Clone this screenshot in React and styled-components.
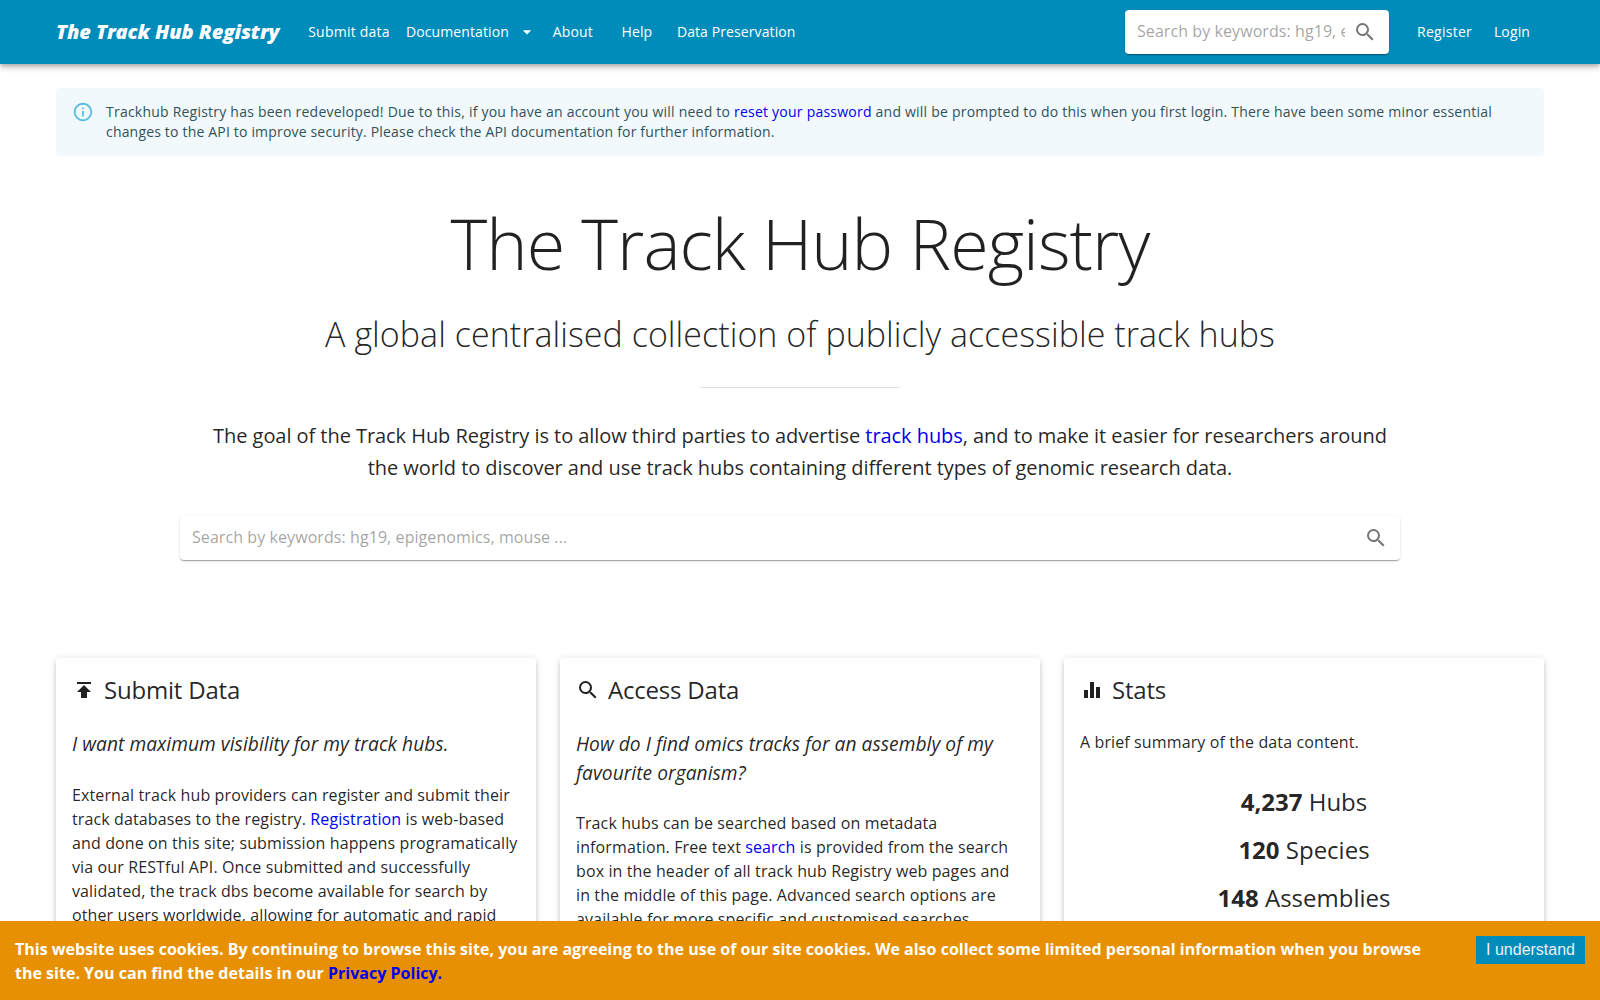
import React from "react";
import styled, { createGlobalStyle } from "styled-components";
import {
  MdArrowDropDown,
  MdEqualizer,
  MdInfoOutline,
  MdPublish,
  MdSearch,
} from "react-icons/md";

const COLORS = {
  primary: "#008cba",
  text: "rgba(0, 0, 0, 0.87)",
  link: "#0000ee",
  alertBg: "#f1f9fc",
  alertText: "#31525b",
  alertIcon: "#5bc0de",
  cookie: "#e89003",
};

const STATS = [
  { value: "4,237", label: "Hubs" },
  { value: "120", label: "Species" },
  { value: "148", label: "Assemblies" },
];

const SearchBox = ({ large }) => (
  <SearchForm $large={large}>
    <SearchInput placeholder="Search by keywords: hg19, epigenomics, mouse ..." />
    <SearchButton type="button" aria-label="search">
      <MdSearch size={24} />
    </SearchButton>
  </SearchForm>
);

const Header = () => (
  <HeaderBar>
    <SiteName href="#">The Track Hub Registry</SiteName>
    <Nav>
      <NavButton $width={98} $spacing="0.24px">
        Submit data
      </NavButton>
      <NavButton $spacing="0.1px">
        Documentation
        <MdArrowDropDown size={20} />
      </NavButton>
      <NavButton>About</NavButton>
      <NavButton>Help</NavButton>
      <NavButton $spacing="0.1px">Data Preservation</NavButton>
    </Nav>
    <SearchBox />
    <UserNav>
      <NavButton $width={71} $spacing="0.26px">
        Register
      </NavButton>
      <NavButton>Login</NavButton>
    </UserNav>
  </HeaderBar>
);

export default function App() {
  return (
    <Page>
      <GlobalStyle />
      <Header />
      <Main>
        <Alert>
          <MdInfoOutline size={22} />
          <AlertMessage>
            Trackhub Registry has been redeveloped! Due to this, if you have an
            account you will need to <Link href="#">reset your password</Link>{" "}
            and will be prompted to do this when you first login. There have
            been some minor essential changes to the API to improve security.
            Please check the API documentation for further information.
          </AlertMessage>
        </Alert>

        <Hero>
          <Title>The Track Hub Registry</Title>
          <Subtitle>
            A global centralised collection of publicly accessible track hubs
          </Subtitle>
          <Divider />
          <Goal>
            The goal of the Track Hub Registry is to allow third parties to
            advertise <Link href="#">track hubs</Link>, and to make it easier
            for researchers around the world to discover and use track hubs
            containing different types of genomic research data.
          </Goal>
          <SearchBox large />
        </Hero>

        <Cards>
          <Card>
            <CardTitle>
              <MdPublish size={24} />
              Submit Data
            </CardTitle>
            <Question>I want maximum visibility for my track hubs.</Question>
            <Text>
              External track hub providers can register and submit their track
              databases to the registry. <Link href="#">Registration</Link> is
              web-based and done on this site; submission happens
              programatically via our RESTful API. Once submitted and
              successfully validated, the track dbs become available for search
              by other users worldwide, allowing for automatic and rapid
            </Text>
          </Card>
          <Card>
            <CardTitle>
              <MdSearch size={24} />
              Access Data
            </CardTitle>
            <Question>
              How do I find omics tracks for an assembly of my favourite
              organism?
            </Question>
            <Text>
              Track hubs can be searched based on metadata information. Free
              text <Link href="#">search</Link> is provided from the search box
              in the header of all track hub Registry web pages and in the
              middle of this page. Advanced search options are available for
              more specific and customised searches.
            </Text>
          </Card>
          <Card>
            <CardTitle>
              <MdEqualizer size={24} />
              Stats
            </CardTitle>
            <Text>A brief summary of the data content.</Text>
            <StatList>
              {STATS.map((stat) => (
                <li key={stat.label}>
                  <b>{stat.value}</b> {stat.label}
                </li>
              ))}
            </StatList>
          </Card>
        </Cards>
      </Main>

      <CookieBar>
        <CookieText>
          This website uses cookies. By continuing to browse this site, you are
          agreeing to the use of our site cookies. We also collect some limited
          personal information when you browse the site. You can find the
          details in our <Link href="#">Privacy Policy.</Link>
        </CookieText>
        <CookieButton>I understand</CookieButton>
      </CookieBar>
    </Page>
  );
}

const GlobalStyle = createGlobalStyle`
  *, *::before, *::after {
    box-sizing: border-box;
  }

  body {
    margin: 0;
    background: #fff;
    color: ${COLORS.text};
    font-family: "Open Sans", sans-serif;
    font-size: 16px;
    line-height: 1.5;
  }
`;

const Page = styled.div`
  height: 100vh;
  overflow: hidden;
`;

const Link = styled.a`
  color: ${COLORS.link};
  text-decoration: none;
`;

const HeaderBar = styled.header`
  position: relative;
  display: flex;
  align-items: center;
  height: 64px;
  padding: 0 56px;
  background: ${COLORS.primary};
  color: #fff;
  box-shadow: 0 2px 4px -1px rgba(0, 0, 0, 0.2), 0 4px 5px rgba(0, 0, 0, 0.14),
    0 1px 10px rgba(0, 0, 0, 0.12);
`;

const SiteName = styled.a`
  width: 244px;
  color: inherit;
  font-size: 20px;
  font-style: italic;
  font-weight: 800;
  letter-spacing: -0.08px;
  line-height: 1.6;
  text-decoration: none;
  white-space: nowrap;
`;

const Nav = styled.nav`
  display: flex;
  flex: 1;
`;

const UserNav = styled(Nav)`
  flex: none;
  margin-left: 20px;
`;

const NavButton = styled.button`
  display: inline-flex;
  align-items: center;
  justify-content: center;
  min-width: ${({ $width }) => $width || 64}px;
  padding: 6px 8px;
  border: 0;
  background: none;
  color: inherit;
  font-family: inherit;
  font-size: 14px;
  line-height: 1.75;
  letter-spacing: ${({ $spacing }) => $spacing || "0.15px"};
  white-space: nowrap;

  svg {
    margin: 0 -4px 0 8px;
  }
`;

const SearchForm = styled.form`
  display: flex;
  align-items: center;
  width: ${({ $large }) => ($large ? "1220px" : "264px")};
  height: 44px;
  margin: ${({ $large }) => ($large ? "32px 0 0 124px" : "0")};
  padding: 2px 4px;
  border-radius: 4px;
  background: #fff;
  box-shadow: 0 2px 1px -1px rgba(0, 0, 0, 0.2), 0 1px 1px rgba(0, 0, 0, 0.14),
    0 1px 3px rgba(0, 0, 0, 0.12);
`;

const SearchInput = styled.input`
  flex: 1;
  min-width: 0;
  height: 32px;
  margin-left: 8px;
  padding: 3px 0 6px;
  border: 0;
  outline: 0;
  background: none;
  font-family: inherit;
  font-size: 16px;
  letter-spacing: 0.075px;

  &::placeholder {
    color: rgba(0, 0, 0, 0.87);
    opacity: 0.42;
  }
`;

const SearchButton = styled.button`
  display: flex;
  padding: 8px;
  border: 0;
  background: none;
  color: rgba(0, 0, 0, 0.54);
`;

const Main = styled.main`
  padding: 24px 56px 0;
`;

const Alert = styled.div`
  display: flex;
  padding: 6px 16px;
  border-radius: 4px;
  background: ${COLORS.alertBg};
  color: ${COLORS.alertText};

  svg {
    flex: none;
    margin: 7px 12px 7px 0;
    color: ${COLORS.alertIcon};
  }
`;

const AlertMessage = styled.div`
  padding: 8px 0;
  font-size: 14px;
  line-height: 20px;
  letter-spacing: 0.18px;

  &::first-line {
    letter-spacing: 0.225px;
  }
`;

const Hero = styled.section`
  padding-top: 45px;
  text-align: center;
`;

const Title = styled.h1`
  margin: 0;
  font-size: 70px;
  font-weight: 300;
  letter-spacing: -0.97px;
  line-height: 84px;
`;

const Subtitle = styled.h2`
  margin: 28px 0 0;
  font-size: 34px;
  font-weight: 300;
  letter-spacing: 0.04px;
  line-height: 42px;
`;

const Divider = styled.hr`
  width: 200px;
  height: 1px;
  margin: 32px auto 0;
  border: 0;
  background: rgba(0, 0, 0, 0.12);
`;

const Goal = styled.p`
  width: 1190px;
  margin: 32px auto 0;
  font-size: 20px;
  line-height: 32px;
  letter-spacing: -0.055px;
`;

const Cards = styled.section`
  display: grid;
  grid-template-columns: repeat(3, 1fr);
  gap: 24px;
  margin-top: 98px;
`;

const Card = styled.article`
  min-height: 400px;
  padding: 16px;
  border-radius: 4px;
  background: #fff;
  box-shadow: 0 3px 3px -2px rgba(0, 0, 0, 0.2), 0 3px 4px rgba(0, 0, 0, 0.14),
    0 1px 8px rgba(0, 0, 0, 0.12);
`;

const CardTitle = styled.h3`
  display: flex;
  align-items: center;
  gap: 8px;
  margin: 0 0 24px;
  font-size: 24px;
  font-weight: 400;
  letter-spacing: -0.2px;
  line-height: 32px;
`;

const Question = styled.p`
  margin: 0 0 23.75px;
  font-size: 19.2px;
  font-style: italic;
  letter-spacing: 0.04px;
  line-height: 28.8px;
`;

const Text = styled.p`
  margin: 0;
  letter-spacing: 0.12px;
`;

const StatList = styled.ul`
  margin: 32px 0 0;
  padding: 0;
  list-style: none;
  text-align: center;
  font-size: 24px;
  line-height: 32px;

  li {
    margin-bottom: 16px;
  }
`;

const CookieBar = styled.aside`
  position: fixed;
  right: 0;
  bottom: 0;
  left: 0;
  display: flex;
  align-items: flex-start;
  height: 79px;
  background: ${COLORS.cookie};
  color: #fff;
`;

const CookieText = styled.div`
  flex: 1;
  margin: 16px 15px;
  font-weight: 700;
  letter-spacing: 0.01px;
`;

const CookieButton = styled.button`
  margin: 15px;
  padding: 5px 10px;
  border: 0;
  background: ${COLORS.primary};
  color: #f0f0f0;
  font-family: "Liberation Sans", Arial, sans-serif;
  font-size: 16px;
  line-height: 18px;
`;
